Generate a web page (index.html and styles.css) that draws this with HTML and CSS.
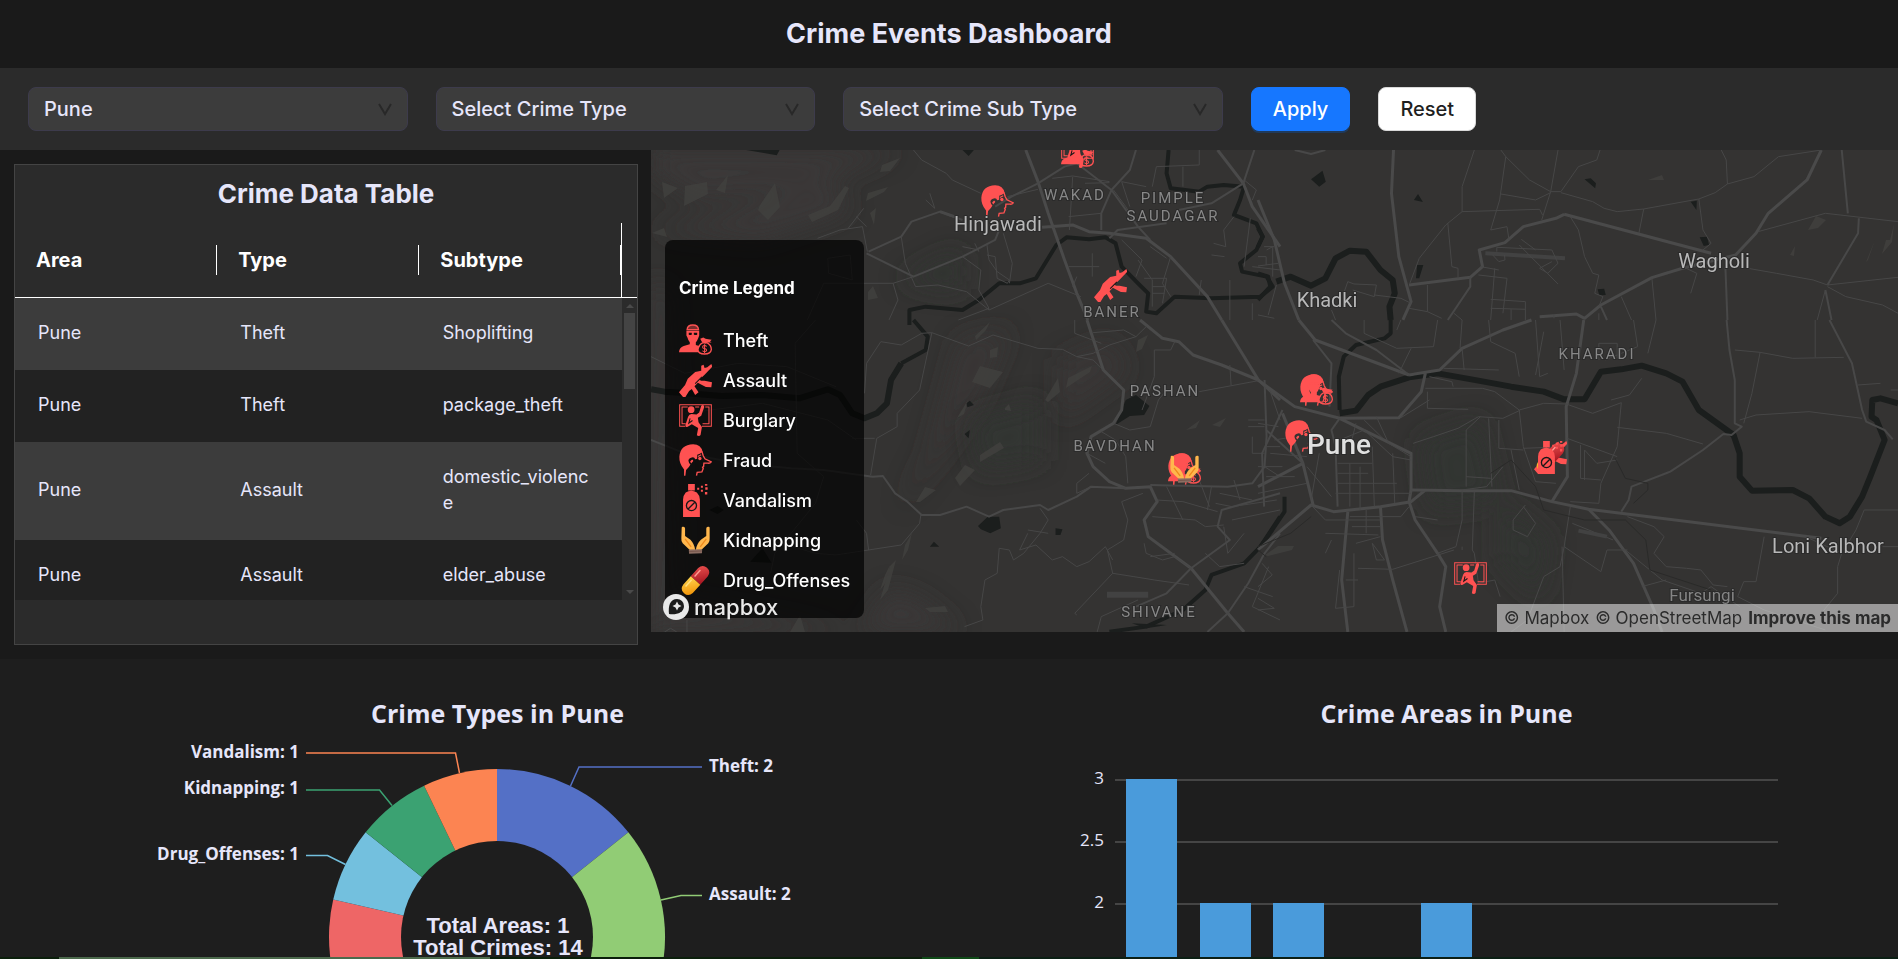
FILE: index.html
```html
<!DOCTYPE html>
<html lang="en">
<head>
<meta charset="utf-8">
<title>Crime Events Dashboard</title>
<link rel="stylesheet" href="styles.css">
</head>
<body>
<svg class="sprite" aria-hidden="true">
  <defs>
    <linearGradient id="pill-red" x1="0" y1="0" x2="1" y2="1"><stop offset="0" stop-color="#ef5350"/><stop offset="1" stop-color="#a31420"/></linearGradient>
    <linearGradient id="pill-gold" x1="0" y1="0" x2="1" y2="1"><stop offset="0" stop-color="#ffd54f"/><stop offset="1" stop-color="#f08c00"/></linearGradient>
  </defs>
  <symbol id="i-theft" viewBox="0 0 98 98">
    <path d="M24 17Q25 3 41 3Q57 3 58 17Z" fill="#ff5252" fill-opacity=".45" stroke="#ff5252" stroke-width="4"/>
    <g fill="#ff5252">
      <path fill-rule="evenodd" d="M22 21H60V34L57 42Q54 50 50 54V62L62 66Q56 72 57 84H0Q1 69 14 65L32 60V54Q27 48 25 40L22 34ZM29 26V32Q35 34 38 31V26ZM44 26V31Q48 34 54 32V26Z"/>
      <path d="M69 55L63 44L72 40L79 44L87 45L97 47L92 52L97 55H84L80 58Z"/>
    </g>
    <path d="M70 56H84Q96 63 96 76Q94 89 76 89Q57 89 56 76Q58 62 70 56Z" fill="none" stroke="#ff5252" stroke-width="4"/>
    <path d="M82 67Q80 64 76 64Q70 64 70 68Q70 72 76 73Q82 74 82 78Q81 82 76 82Q71 82 70 79M76 60V86" fill="none" stroke="#ff5252" stroke-width="3"/>
  </symbol>
  <symbol id="i-assault" viewBox="0 0 98 98">
    <path fill="#ff5252" d="M96 0L99 8L76 32L60 47L66 50L76 50L98 54L96 69L80 68L64 60L56 56L46 66L58 84L48 92L38 74L30 80L19 98H12L0 84L18 62L26 44L48 24L66 20L66 5L73 2L76 12L84 10Z"/>
    <path d="M48 58L68 38" stroke="#141414" stroke-width="3"/>
  </symbol>
  <symbol id="i-burglary" viewBox="0 0 98 98">
    <path d="M18 66H2V2H96V66H68M20 59H9V9H26M48 9H60M78 9H89V59H70" fill="none" stroke="#ff5252" stroke-width="3"/>
    <g fill="#ff5252">
      <circle cx="36" cy="17" r="10"/>
      <path d="M66 5Q74 0 75 9L66 35L56 41L58 54L68 68L64 92Q60 98 53 93L57 71L38 60L27 67Q18 72 19 62L27 38Q30 31 37 30L52 31L60 25Z"/>
    </g>
    <path d="M33 43L29 57L40 49" fill="none" stroke="#141414" stroke-width="3"/>
  </symbol>
  <symbol id="i-fraud" viewBox="0 0 98 98">
    <path fill="#ff5252" d="M15 94V76Q0 58 1 38Q4 2 42 1Q66 1 70 24Q62 30 54 32V44L48 45Q46 38 38 40Q28 42 28 50Q29 58 34 61Q30 70 21 77L19 94Z"/>
    <path fill="#ff5252" d="M38 47Q43 45 42 51L36 58L33 52Z"/>
    <path d="M68 22L72 35L77 44L96 53Q94 58 86 57H74L73 67L70 69L72 73L68 83L54 84L52 94" fill="none" stroke="#ff5252" stroke-width="4"/>
    <circle cx="62" cy="43" r="5" fill="#ff5252"/>
    <path d="M56 37L66 32" stroke="#ff5252" stroke-width="3"/>
  </symbol>
  <symbol id="i-vandal" viewBox="0 0 98 98">
    <g fill="#ff5252">
      <path d="M27 0H47V19H27ZM20 25Q36 15 53 25Q62 34 62 46V98H12V46Q12 34 20 25Z"/>
      <path d="M54 11H60V17H54ZM65 5H71V11H65ZM65 17H71V23H65ZM77-2H84V5H77ZM78 10H85V17H78ZM77 24H84V31H77Z"/>
    </g>
    <circle cx="37" cy="64" r="15" fill="none" stroke="#181818" stroke-width="4"/>
    <path d="M27 74L47 54" stroke="#181818" stroke-width="4"/>
  </symbol>
  <symbol id="i-kidnap" viewBox="0 0 98 98">
    <path fill="#ffb74d" d="M8 11Q8 7 13 8Q18 8 18 13V36L34 47Q46 60 48 77H32L11 57Q6 50 7 42ZM91 11Q91 7 86 8Q81 8 81 13V36L65 47Q52 60 50 77H66L87 57Q92 50 91 42Z"/>
    <path d="M18 44L36 68M81 44L63 68" stroke="#f08a1c" stroke-width="4"/>
    <path fill="#8d6e63" d="M29 76L69 75L68 87L30 88Z"/>
    <path d="M30 82L68 80" stroke="#6d4c41" stroke-width="2"/>
  </symbol>
  <symbol id="i-drug" viewBox="0 0 98 98">
    <g transform="rotate(42 49 49)">
      <path d="M30 49V16Q32-2 49-2Q66-2 68 16V49Z" fill="url(#pill-red)"/>
      <path d="M30 49V82Q32 100 49 100Q66 100 68 82V49Z" fill="url(#pill-gold)"/>
      <path d="M39 16V42" stroke="#ff9a94" stroke-width="4"/>
      <path d="M39 55V82" stroke="#ffe082" stroke-width="4"/>
    </g>
  </symbol>
</svg>

<header class="topbar"><h1>Crime Events Dashboard</h1></header>

<form class="filters">
  <div class="field">
    <select aria-label="City"><option>Pune</option></select>
    <svg class="chevron" viewBox="0 0 14 14"><path d="M1 2L7 12L13 2"/></svg>
  </div>
  <div class="field">
    <select aria-label="Crime type"><option>Select Crime Type</option></select>
    <svg class="chevron" viewBox="0 0 14 14"><path d="M1 2L7 12L13 2"/></svg>
  </div>
  <div class="field">
    <select aria-label="Crime sub type"><option>Select Crime Sub Type</option></select>
    <svg class="chevron" viewBox="0 0 14 14"><path d="M1 2L7 12L13 2"/></svg>
  </div>
  <button type="button" class="btn btn-primary">Apply</button>
  <button type="button" class="btn">Reset</button>
</form>

<main class="overview">
  <section class="card">
    <h2>Crime Data Table</h2>
    <div class="table-head">
      <table>
        <thead><tr><th>Area</th><th>Type</th><th>Subtype</th></tr></thead>
      </table>
    </div>
    <div class="table-body">
      <div class="rows">
        <table>
          <tbody>
            <tr><td>Pune</td><td>Theft</td><td>Shoplifting</td></tr>
            <tr><td>Pune</td><td>Theft</td><td>package_theft</td></tr>
            <tr><td>Pune</td><td>Assault</td><td>domestic_violence</td></tr>
            <tr><td>Pune</td><td>Assault</td><td>elder_abuse</td></tr>
          </tbody>
        </table>
      </div>
      <div class="scrollbar"><i class="up"></i><i class="thumb"></i><i class="down"></i></div>
    </div>
  </section>

  <section class="map" aria-label="Map">
    <svg class="map-canvas" viewBox="651 150 1247 482" preserveAspectRatio="xMinYMin slice">
      <rect x="651" y="150" width="2400" height="900" fill="#343332"/>
      <defs><filter id="soft" x="-20%" y="-20%" width="140%" height="140%"><feGaussianBlur stdDeviation="12"/></filter></defs>
      <g fill="#3a3938" filter="url(#soft)">
        <path d="M651 170L700 200L790 190L850 170L900 150L651 150Z"/>
        <path d="M651 230L760 240L850 210L830 180L720 215Z"/>
        <path d="M651 280L670 290L680 600L850 632L651 632Z"/>
        <path d="M860 632L890 590L920 600L960 632Z"/>
        <path d="M960 340L1010 330L980 400L930 470L900 510L930 450Z" opacity=".7"/>
        <path d="M1060 360L1110 340L1130 370L1060 420Z" opacity=".6"/>
      </g>
      <g fill="#313432" filter="url(#soft)">
        <path d="M1420 440L1480 420L1500 500L1430 510ZM970 420L1040 400L1040 460L980 470ZM1500 500L1550 540L1540 600L1500 560ZM900 280L960 250L960 290Z"/>
      </g>
      <g fill="#42413f" opacity=".8">
        <path d="M685 186L707 182L708 194L684 206ZM716 190L728 175L725 193ZM760 205L775 183L780 207L768 220L758 210ZM808 215L830 206L845 186L849 188L838 210L812 222ZM882 165L900 158L890 171L880 172ZM662 182L678 188L664 198ZM868 193L888 187L884 192L866 201ZM652 233L664 228L667 237ZM870 213L876 208L874 225ZM868 292L873 286L878 298L868 300ZM975 336L990 322L986 330L976 340ZM1138 340L1148 335L1142 349L1136 352ZM972 382L980 366L1003 372L990 388ZM957 418L968 400L964 414ZM1045 400L1058 378L1060 392L1048 402ZM1068 378L1092 366L1090 372L1066 388ZM990 350L998 347L997 357L990 358ZM955 478L965 465L975 470L960 486ZM916 502L925 487L936 490L920 502ZM980 455L1000 442L1004 448L980 462ZM905 545L912 533L908 550L902 560ZM885 575L890 565L888 580L880 590ZM925 608L945 606L948 612L930 612ZM1186 430L1200 420L1196 428ZM1212 425L1226 418L1220 427ZM1005 408L1009 404L1011 411L1005 410Z"/>
        <path d="M1808 230L1816 216L1826 220L1818 228ZM1866 262L1875 240L1868 260ZM1890 240L1894 224L1892 242L1882 254L1886 240ZM1648 180L1662 175L1664 180ZM1790 255L1795 246L1794 256ZM1265 555L1278 546L1294 546L1292 550L1268 556ZM790 632L800 615L805 632ZM890 566L896 560L888 590L880 600Z"/>
      </g>

      <!-- North-west sector -->
      <g class="sector" transform="translate(640 0) scale(.4082 .3333)">
        <path class="water" d="M660 975V930L700 920L790 930L830 900L880 850L930 850L970 835L1020 735L1045 712L1100 718L1140 712L1165 730L1180 800L1220 850L1245 880L1240 935L1265 940L1310 890L1400 895L1520 890L1550 860L1535 830L1475 815L1470 790L1510 750L1525 710L1510 670L1455 645L1470 600L1480 560L1430 555L1390 560L1370 575L1300 565L1290 520L1295 450"/>
        <path class="lake" d="M260 450H342L335 466L300 458ZM790 450H818L805 468Z"/>
        <path class="major" d="M945 450L975 545L1000 640L1040 780L1070 880L1097 960M735 635L770 650M985 682L1060 675L1100 695L1150 700L1240 715L1300 770L1390 890L1425 960M1415 450L1478 550L1500 620L1568 740"/>
        <path class="road" d="M560 755L640 710L665 665L735 635L790 660M975 550L1040 500L1070 490L1155 570L1220 680L1250 720M1155 570L1200 510L1215 450M1155 570L1130 640V690M1505 450L1478 550L1400 610L1320 630M1150 715L1170 690L1290 670M975 550L910 590L870 620M555 760L670 830L790 770L830 745L870 720L880 690"/>
        <path class="lane" d="M435 715L490 690L545 680L557 755M548 625L510 685M555 680L530 650M670 450L690 480L750 520L765 540L835 580M640 710L650 790L675 860L730 855L800 875L855 930L1000 850L1080 890M460 775L515 765L520 840L462 820ZM410 960L450 850H620L670 830M620 850L632 900L610 960M790 770L835 810L830 870L855 925L780 960M710 580L722 625L700 600M900 590L975 568M1010 535L1060 528L1150 545M1060 530L1052 690M1090 550L1150 548M1050 650L1130 640M1050 800H1125M1108 760V830M1070 830L1060 860M1180 720L1230 780L1215 830M1250 740L1290 775M1220 780L1255 840V920M1235 835H1290L1280 910M1255 860H1285M1255 880H1285M1300 770L1280 850L1300 890M1375 840L1370 885M1220 680L1190 620L1160 570M1255 560L1265 500L1370 495V450M1330 500L1330 560M1200 620L1180 545L1240 560M1480 540L1510 570L1500 600M1455 650L1430 690L1435 740L1405 730M1495 655L1480 800M1400 765L1432 770M1445 840V960M1535 750L1550 740V830M1500 800L1568 810M1500 910V960M850 735L855 780L875 815L905 840L900 850L875 835L870 770L850 765M830 750L790 740M905 850L912 790L890 700M820 730L830 755"/>
      </g>

      <!-- North-east sector -->
      <g class="sector" transform="translate(1258 0) scale(.4082 .3333)">
        <path class="water big" d="M45 845L80 830L130 857L165 835L190 775L225 752L265 755L300 810L330 840L335 880L322 920L325 960"/>
        <path class="water" d="M0 685L12 710L0 740M0 820L25 830L30 860L0 900"/>
        <path class="lake" d="M130 538L158 512L166 545L150 560ZM382 600L392 582L404 606ZM800 538L815 535L828 550L826 565ZM1060 605L1075 602L1074 630ZM1082 712L1100 710L1105 735L1092 738ZM832 868L848 866L852 885L836 886ZM390 795H405L395 835H387Z"/>
        <path class="major" d="M0 600L40 720L65 850L100 960M332 450L327 580L345 770L375 905L355 960M750 643L1110 760M370 855L520 832L550 800L542 750L605 728L650 680L730 655L750 643M690 950L780 942L800 955L840 915L965 833L1040 805L1170 765L1220 700L1250 640L1345 540L1380 450"/>
        <path class="road" d="M1430 450L1445 640M520 832L520 860L465 960M1395 855L1470 700L1472 655M1145 800L1150 960M1390 870L1405 960M840 920L855 960M90 450L130 462L165 450"/>
        <path class="lane" d="M530 450L500 560V635L460 675L395 775L372 850M500 635L690 628L697 645M595 450L607 470L592 600L570 690L610 680L615 720M607 470L665 540L717 575L742 575L785 500L830 480L838 450M735 450L717 575L695 660M595 582L680 600L717 578M742 578L820 605L848 625L880 635L945 627L1080 597L1120 578L1150 552L1215 530L1275 470L1380 450M945 627L933 700M1150 552L1147 480L1135 450M1080 597L1090 690L1110 730L1090 750M765 650L785 690L800 770L820 820L835 825L825 880L845 890L835 920M1225 695L1330 660L1390 640L1568 665M1200 805L1270 820L1360 840L1395 855L1568 832M1395 860L1440 890L1530 915L1568 940M1390 870L1370 960M890 890L915 960M965 835L975 960M1040 800L1075 820L1060 880M465 670L475 800L490 805V835M580 805L570 960M545 800L590 810M540 825L610 835L600 940M570 898L655 905V960M570 925L655 928M620 928V960M415 855V935L370 925M415 935L450 955M15 740H40M0 770H20V795M0 798L50 790M45 855L25 945M0 945L40 955M220 845L235 852L290 855L285 890L232 870M220 845L210 880M285 885L350 895L375 910M180 930L190 960M480 940L500 960M725 955V945M835 940V960"/>
        <path class="runway" d="M557 760L752 775"/>
        <path class="lane" d="M640 735L735 852M585 755V742L720 750L735 790L710 820L690 805L720 785M575 765L590 785L605 780L604 765M645 718L680 750"/>
      </g>

      <!-- South-west sector -->
      <g class="sector" transform="translate(640 320) scale(.4082 .3333)">
        <path class="water big" d="M27 208L60 215L100 218L200 228L300 225L390 235L460 208L490 225L520 280L550 295L580 280L605 250L615 180L640 130"/>
        <path class="water" d="M640 130L700 90L705 50L670 0"/>
        <path class="water" d="M1568 590L1520 680L1480 730L1400 765L1385 810L1330 870L1240 920L1150 935"/>
        <path class="lake" d="M1190 240L1215 225L1248 258L1235 285L1200 288L1165 315ZM828 618L852 590H880L884 625L858 640L835 628ZM800 250L808 242L818 255L802 262ZM795 342L808 330L805 355ZM1018 625L1035 628L1030 645H1018ZM710 680L720 665L733 680ZM270 725L300 685L322 728ZM170 570L190 558L205 570L190 582ZM1205 910L1290 915L1240 925Z"/>
        <path class="major" d="M1095 0L1135 150L1185 210L1180 270L1160 310L1105 350L1095 400L1110 440L1150 485L1190 505L1250 500L1267 545L1235 600L1245 650L1350 745L1440 880L1480 936M1425 0L1515 180L1568 240M1225 0L1280 55L1320 65L1355 105L1425 135L1515 180"/>
        <path class="road" d="M27 360L110 400L240 430L370 445L450 450L570 470L595 468L625 520L655 545L690 585L735 585L800 560L855 590L890 570L980 555L1000 570L1070 530L1105 500L1190 505M1530 180L1535 350L1530 440L1500 490L1440 500L1250 495M1568 520L1425 570L1415 620L1445 660L1350 745L1290 820L1215 860M1440 880L1490 790L1530 700L1568 640M1440 880L1390 936"/>
        <path class="lane" d="M590 65L640 75L690 40L715 38L805 78L865 45L975 85L1035 88L1070 110L1110 120L1135 150M715 38L685 210L630 280V320L580 355L565 465M430 0L380 70L385 400L450 470L430 550L330 700L320 760M260 640L430 700L480 705L640 675L685 610L688 585M560 690L555 640L530 600M520 355L575 355M590 65L555 130L550 220M27 110L110 160L240 130L360 140L480 200M110 280L300 250L460 300L530 360M1070 110L1110 100L1150 75L1215 50L1240 20M1065 0L1065 40L1130 70M1215 50L1185 30L1110 38M1260 90V170L1230 270M1310 65L1300 90L1260 90M1370 215L1515 182M1445 135L1448 195M1160 310L1200 330L1250 320L1270 240L1290 210M1130 335L1165 360L1190 410L1195 490M1095 400L1140 430M1105 500L1070 520V490L1100 460M1232 520L1180 545L1195 600L1185 660L1145 690L1158 760L1210 770L1260 780L1345 795M1158 720L1140 680L1100 725L1070 740L1035 710L1010 720L970 675L930 690M880 685L875 760L845 780L835 860L840 900L795 920M880 685L905 690L915 720L940 700L980 640L1000 600L980 565M950 630L1000 640M930 690L950 640M1158 760L1065 880L1070 885M1120 936L1130 890L1220 840M1350 745L1310 710L1280 720L1240 700L1235 670M1255 590L1360 600L1385 620L1430 615M1265 540L1330 545L1415 575M1290 500L1330 600M1370 480L1395 560M1400 500L1390 570M1455 480L1470 540M1490 300H1530M1490 320H1530M1500 350V400H1530M1540 200L1568 300M1535 380H1568M1530 440L1568 470M1420 520L1500 540M1410 550L1450 560L1560 540M1430 620L1440 700L1480 640M1450 600L1568 570M1540 740L1500 860L1568 900M1480 800L1550 830M1385 700L1420 740L1480 730M60 936L75 925L90 936M115 900V936M1310 700L1250 710"/>
        <path class="building" d="M1144 815H1245V833H1144Z"/>
      </g>

      <!-- South-east sector -->
      <g class="sector" transform="translate(1258 320) scale(.4082 .3333)">
        <path class="water" d="M325 0V40L310 55L240 75L210 110L198 170L200 270M65 530V575L35 630L0 690"/>
        <path class="water big" d="M200 280L240 272L270 225L300 200L370 172L440 160L540 182L620 200L700 215L750 238L800 238L840 155L890 148L940 137L1000 160L1040 185L1080 270L1165 345L1180 400V470L1210 512L1310 510L1350 535L1390 590L1425 610L1450 590L1480 530L1500 470L1535 360L1515 300L1503 290L1505 240L1525 235L1568 250"/>
        <path class="major" d="M100 0L140 60L370 165M0 180L90 260L200 295L345 293L400 215L410 160M370 165L445 150L500 85L600 30L670 0M0 500L110 430L60 280M200 295L375 400L375 510L500 512L620 512L720 545L810 568L1380 655M110 430L135 555M0 690L130 555L185 575L300 560L375 545L410 510"/>
        <path class="major" d="M375 510L370 545L385 600L440 700L460 740L445 860L460 936M220 575L205 780L220 936M300 560L305 660L330 780L365 936M810 568L860 630L920 730L970 870L990 936M798 0L780 160L755 260L758 470L720 545"/>
        <path class="road" d="M1148 0L1155 90L1168 180L1168 310L1185 320L1160 345L1140 342L1090 390L1010 455L915 500L908 540L890 575M1400 0L1455 130L1480 270L1490 305L1535 330L1555 358M180 0L215 40L290 90L370 165M135 60L180 130L175 260M200 295L180 330L190 380L195 560M60 270L10 400L15 560M110 430L20 330"/>
        <path class="lane" d="M410 205L550 205L580 215L640 270L700 250L755 252L820 280L890 248L880 380L840 490L835 550L765 545M640 270L650 380L680 485L730 490M650 385L757 380M757 355L880 410M865 240L910 225L940 175M455 145L590 150M500 85L505 150M420 170L475 185L478 200M415 215V265L515 268M350 293L420 240M380 370L430 350L490 325L540 290L600 295L640 272M565 295L573 500M590 300V385L650 390M880 322L1000 340L1090 372M790 375V475L840 480M800 480V390L830 430L880 420M1168 90L1230 97L1310 115L1435 112M1230 97L1210 220L1190 310M1365 0V112M1180 300L1220 285L1350 275L1480 295M1470 195L1525 190M1550 210H1568M530 515L525 690L530 700L540 790L580 780L593 830M500 512V600L485 680L440 700M500 680V690M385 590L440 600M130 555L165 600H300M165 640L295 645M165 700L180 660M245 745L330 748L480 690M240 670L300 650M280 670L310 720H290L280 670M235 700V860L190 865L200 750M215 780H245M750 680L740 740L700 770L660 900L620 936M745 680L750 936M765 560L750 680L840 755L855 690L905 690M655 555L625 600V630L660 650L680 610L650 560M770 610L870 660M900 690L990 780L1085 820L1110 800M905 590L970 620L995 650L970 700L1000 740L1050 745L1085 750L1115 795L1150 800M1240 650L1220 785H1190L1175 830L1240 870L1390 930M1350 655L1430 700L1420 740V820L1380 880M1568 680H1530M1568 570H1485L1465 630L1440 680M940 800L1000 780M1110 800L1180 860M10 730L35 765L0 800M0 835L40 865L0 870M260 0V40L340 85L430 80L440 0M375 85L345 160M500 0L495 85M565 0L570 65L630 100L640 170M680 0L690 170L710 160M740 0L750 150M700 35L680 165M920 0L930 80L850 120M975 0L955 100M835 120V70H880V115M340 30L350 0M0 440H60M20 470H90M0 520L120 490M40 360L90 350M30 400L120 410M0 310L50 320M120 440L180 530M150 400L130 540M195 430H280M195 460H270M195 490H340M225 430V560M250 440V570M280 380L285 560M330 400L335 550M200 360L260 330L330 410L375 420M240 310L230 360M260 300L310 360M290 290L320 370L375 410M190 520H375M225 590H350L370 560M230 620H300M265 570V640M510 470L570 475M510 500V330L545 290M620 390L640 510M500 510L560 500L600 440"/>
        <path class="rail" d="M0 680L80 640L130 590M570 460L620 420L680 500L700 570L800 600L900 600L950 660L960 750L1010 770L1110 810M875 415L900 475L955 490V510L920 550M0 690L20 710"/>
        <path class="runway" d="M785 632L855 650"/>
      </g>

      <use href="#i-theft" x="1061" y="136" width="33" height="33"/>
      <use href="#i-burglary" x="1061" y="136" width="33" height="33"/>
      <use href="#i-fraud" x="981" y="185" width="33" height="33"/>
      <use href="#i-assault" x="1094" y="269" width="33" height="33"/>
      <use href="#i-fraud" x="1300" y="374" width="33" height="33"/>
      <use href="#i-theft" x="1300" y="374" width="33" height="33"/>
      <use href="#i-fraud" x="1285" y="420" width="33" height="33"/>
      <use href="#i-theft" x="1168" y="453" width="33" height="33"/>
      <use href="#i-fraud" x="1168" y="453" width="33" height="33"/>
      <use href="#i-kidnap" x="1168" y="453" width="33" height="33"/>
      <use href="#i-assault" x="1534" y="441" width="33" height="33"/>
      <use href="#i-drug" x="1534" y="441" width="33" height="33"/>
      <use href="#i-vandal" x="1534" y="441" width="33" height="33"/>
      <use href="#i-burglary" x="1454" y="562" width="33" height="33"/>

      <g class="town">
        <text x="998" y="231">Hinjawadi</text>
        <text x="1327" y="307">Khadki</text>
        <text x="1714" y="268">Wagholi</text>
        <text x="1828" y="553">Loni Kalbhor</text>
        <text class="city" x="1339" y="454">Pune</text>
        <text class="small" x="1702" y="601">Fursungi</text>
      </g>
      <g class="suburb">
        <text x="1075" y="200">WAKAD</text>
        <text x="1173" y="203">PIMPLE</text>
        <text x="1173" y="221">SAUDAGAR</text>
        <text x="1112" y="317">BANER</text>
        <text x="1597" y="359">KHARADI</text>
        <text x="1165" y="396">PASHAN</text>
        <text x="1115" y="451">BAVDHAN</text>
        <text x="1159" y="617">SHIVANE</text>
      </g>
    </svg>

    <div class="legend">
      <h3>Crime Legend</h3>
      <ul>
        <li><svg><use href="#i-theft"/></svg>Theft</li>
        <li><svg><use href="#i-assault"/></svg>Assault</li>
        <li><svg><use href="#i-burglary"/></svg>Burglary</li>
        <li><svg><use href="#i-fraud"/></svg>Fraud</li>
        <li><svg><use href="#i-vandal"/></svg>Vandalism</li>
        <li><svg><use href="#i-kidnap"/></svg>Kidnapping</li>
        <li><svg><use href="#i-drug"/></svg>Drug_Offenses</li>
      </ul>
    </div>
    <a class="mapbox" href="#mapbox">
      <svg viewBox="0 0 26 26"><circle cx="13" cy="13" r="13" fill="#e9e9e9"/><path d="M6 20C5 12 7 5 14 5A7 7 0 0 1 21 12C21 19 13 21 6 20Z" fill="#1c1c1c"/><path d="M14 7.500L15.500 10.500L18.500 12L15.500 13.500L14 16.500L12.500 13.500L9.500 12L12.500 10.500Z" fill="#e9e9e9"/></svg>mapbox
    </a>
    <div class="attribution"><a href="#mapbox">© Mapbox</a><a href="#osm">© OpenStreetMap</a><a class="improve" href="#improve">Improve this map</a></div>
  </section>
</main>

<section class="charts">
  <figure>
    <h2>Crime Types in Pune</h2>
    <svg viewBox="46 739 903 366">
      <path fill="#5470c6" d="M497 937V769A168 168 0 0 1 628.350 832.250Z"/>
      <path fill="#91cc75" d="M497 937L628.350 832.250A168 168 0 0 1 660.790 974.380Z"/>
      <path fill="#fac858" d="M497 937L660.790 974.380A168 168 0 0 1 424.110 1088.360Z"/>
      <path fill="#ee6666" d="M497 937L424.110 1088.360A168 168 0 0 1 333.210 899.620Z"/>
      <path fill="#73c0de" d="M497 937L333.210 899.620A168 168 0 0 1 365.650 832.250Z"/>
      <path fill="#3ba272" d="M497 937L365.650 832.250A168 168 0 0 1 424.110 785.640Z"/>
      <path fill="#fc8452" d="M497 937L424.110 785.640A168 168 0 0 1 497 769Z"/>
      <circle cx="497" cy="937" r="96" fill="#1e1e1e"/>
      <g fill="none" stroke-width="1.500">
        <path stroke="#5470c6" d="M570.500 786L579 767H702"/>
        <path stroke="#91cc75" d="M661 900L681 895.500H702"/>
        <path stroke="#fc8452" d="M459.500 773L455.500 753H306"/>
        <path stroke="#3ba272" d="M392 805.500L379.500 790H306"/>
        <path stroke="#73c0de" d="M345.500 864.500L327.500 855.500H306"/>
      </g>
      <g class="pie-label">
        <text x="709" y="772">Theft: 2</text>
        <text x="709" y="900">Assault: 2</text>
        <text class="end" x="299" y="758">Vandalism: 1</text>
        <text class="end" x="299" y="794">Kidnapping: 1</text>
        <text class="end" x="299" y="860">Drug_Offenses: 1</text>
      </g>
      <g class="pie-total">
        <text x="498" y="933">Total Areas: 1</text>
        <text x="498" y="955">Total Crimes: 14</text>
      </g>
    </svg>
  </figure>
  <figure>
    <h2>Crime Areas in Pune</h2>
    <svg viewBox="995 739 903 366">
      <path class="grid" d="M1115 780H1778M1115 842H1778M1115 904H1778M1115 966H1778M1115 1028H1778"/>
      <path fill="#4a9bdb" d="M1126 779H1177V1100H1126ZM1200 903H1251V1100H1200ZM1273 903H1324V1100H1273ZM1347 1027H1398V1100H1347ZM1421 903H1472V1100H1421Z"/>
      <g class="axis">
        <text x="1104" y="784">3</text>
        <text x="1104" y="846">2.5</text>
        <text x="1104" y="908">2</text>
        <text x="1104" y="969">1.5</text>
      </g>
    </svg>
  </figure>
</section>
<div class="edge"></div>
</body>
</html>
```
FILE: styles.css
```css
* { box-sizing: border-box; }

body {
  margin: 0;
  height: 100vh;
  display: flex;
  flex-direction: column;
  overflow: hidden;
  background: #1a1a1a;
  color: #e6e6fa;
  font-family: Inter, "Open Sans", sans-serif;
}

h1, h2, h3, figure, ul { margin: 0; padding: 0; }
.sprite { position: absolute; width: 0; height: 0; }

.topbar { padding: 18px; text-align: center; }
.topbar h1 { font-size: 27px; line-height: 32px; font-weight: 700; }

.filters {
  display: flex;
  gap: 28px;
  padding: 19px 28px;
  background: #2b2b2b;
}
.field { position: relative; flex: 0 0 20vw; }
.field select {
  width: 100%;
  height: 44px;
  padding: 0 15px;
  appearance: none;
  border: 1px solid #3d3b4c;
  border-radius: 8px;
  background: #3c3c3c;
  color: #e6e6fa;
  font: 500 20px Inter, sans-serif;
}
.chevron {
  position: absolute;
  right: 16px;
  top: 15px;
  width: 14px;
  height: 14px;
  fill: none;
  stroke: #282828;
  stroke-width: 2px;
  pointer-events: none;
}
.btn {
  height: 44px;
  padding: 0 21px;
  border: 1px solid #d9d9d9;
  border-radius: 8px;
  background: #fff;
  color: #1f1f1f;
  font: 500 20px Inter, sans-serif;
}
.btn-primary {
  background: #1677ff;
  border-color: #1677ff;
  color: #fff;
  box-shadow: 0 2px 0 #1f3a5c;
}

.overview { display: grid; grid-template-columns: 651fr 1247fr; }
.card {
  margin: 14px 13px 14px 14px;
  padding-bottom: 44px;
  border: 1px solid #444;
  background: #2b2b2b;
}
.card h2 { padding: 13px; font-size: 26px; line-height: 32px; text-align: center; }
.card table { width: 100%; table-layout: fixed; border-collapse: collapse; text-align: left; }
.table-head {
  display: flex;
  padding-right: 15px;
  border-bottom: 1px solid #fff;
  color: #fff;
}
.table-head table { border-right: 1px solid #fff; }
.table-head th {
  position: relative;
  height: 74px;
  padding: 0 21px;
  font-size: 20px;
  font-weight: 700;
}
.table-head th::after {
  content: "";
  position: absolute;
  right: 0;
  top: 22px;
  height: 30px;
  border-right: 1px solid #fff;
}
.table-body { display: flex; height: 302px; }
.rows { flex: 1; overflow: hidden; }
.rows td {
  padding: 22px 23px 24px;
  font-size: 18px;
  line-height: 26px;
  font-weight: 400;
  overflow-wrap: anywhere;
}
.rows tr:nth-child(odd) { background: #3c3c3c; }
.rows tr:nth-child(even) { background: #222; }
.rows tr { height: 72px; }
.rows tr:nth-child(3) { height: 97px; }
.scrollbar { width: 15px; display: flex; flex-direction: column; align-items: center; padding: 6px 0; }
.up, .down { border: 4px solid transparent; }
.up { border-top: 0; border-bottom-color: #4a4a4a; }
.thumb { width: 11px; height: 76px; margin-top: 5px; background: #444; }
.down { margin-top: auto; border-bottom: 0; border-top-color: #4a4a4a; }

.map { position: relative; margin-bottom: 27px; overflow: hidden; background: #343332; }
.map-canvas { display: block; position: absolute; width: 100%; height: 100%; }
.sector path { fill: none; vector-effect: non-scaling-stroke; stroke-linejoin: round; }
.sector .water { stroke: #1b1e1d; stroke-width: 4px; }
.sector .big { stroke-width: 6px; }
.sector .lake { fill: #1b1e1d; }
.sector .major { stroke: #4a4a4a; stroke-width: 3px; }
.sector .road { stroke: #484848; stroke-width: 2px; }
.sector .lane { stroke: #474747; stroke-width: 1px; }
.sector .rail { stroke: #2a2a29; stroke-width: 1px; }
.sector .runway { stroke: #424242; stroke-width: 4px; }
.sector .building { fill: #424242; }
.town, .suburb {
  font-family: Roboto, sans-serif;
  text-anchor: middle;
  paint-order: stroke;
  stroke: #2a2a2a;
  stroke-width: 2px;
}
.town { font-size: 20px; fill: #b8b8b8; }
.town .city { font-size: 28px; font-weight: 500; fill: #e0e0e0; }
.town .small { font-size: 17px; fill: #858585; }
.suburb { font-size: 15px; letter-spacing: 2px; fill: #888; }

.legend {
  position: absolute;
  left: 14px;
  top: 90px;
  padding: 36px 14px 18px;
  border-radius: 8px;
  background: rgba(0, 0, 0, .7);
  color: #fff;
}
.legend h3 { margin-bottom: 20px; font-size: 17px; line-height: 24px; }
.legend ul { list-style: none; }
.legend li { display: flex; align-items: center; gap: 11px; height: 40px; font-size: 18px; font-weight: 500; }
.legend svg { width: 33px; height: 33px; }

.mapbox {
  position: absolute;
  left: 12px;
  bottom: 11px;
  display: flex;
  align-items: center;
  gap: 5px;
  color: #e9e9e9;
  font: 500 22px/28px Inter, sans-serif;
  text-decoration: none;
}
.mapbox svg { width: 26px; height: 26px; }
.attribution {
  position: absolute;
  right: 0;
  bottom: 0;
  display: flex;
  gap: 6px;
  padding: 0 7px;
  background: rgba(255, 255, 255, .5);
  font-size: 17px;
  line-height: 28px;
}
.attribution a { color: #2b2b2b; text-decoration: none; }
.attribution .improve { font-weight: 700; }

.charts {
  flex: 1;
  min-height: 0;
  display: grid;
  grid-template-columns: 1fr 1fr;
  overflow: hidden;
  background: #1e1e1e;
  font-family: "Open Sans", sans-serif;
}
.charts figure { padding: 32px 0 0 46px; }
.charts h2 { padding-bottom: 4px; font-size: 25px; line-height: 44px; text-align: center; }
.charts svg { display: block; width: 100%; }
.pie-label { font-size: 17px; font-weight: 700; fill: #e6e6fa; }
.pie-label .end { text-anchor: end; }
.pie-total { font: 700 22px "Liberation Sans", sans-serif; text-anchor: middle; fill: #e6e6fa; }
.axis { font-size: 17px; text-anchor: end; fill: #e6e6fa; }
.grid { stroke: #454545; stroke-width: 2px; }

.edge {
  position: fixed;
  left: 0;
  right: 0;
  bottom: 0;
  height: 2px;
  background: linear-gradient(90deg, #0b1f0b 3.100%, #4c6a4c 3.100% 25.800%, #0b1f0b 25.800% 48.600%, #0f4a17 48.600% 51.600%, #0b1f14 51.600%);
}
```
